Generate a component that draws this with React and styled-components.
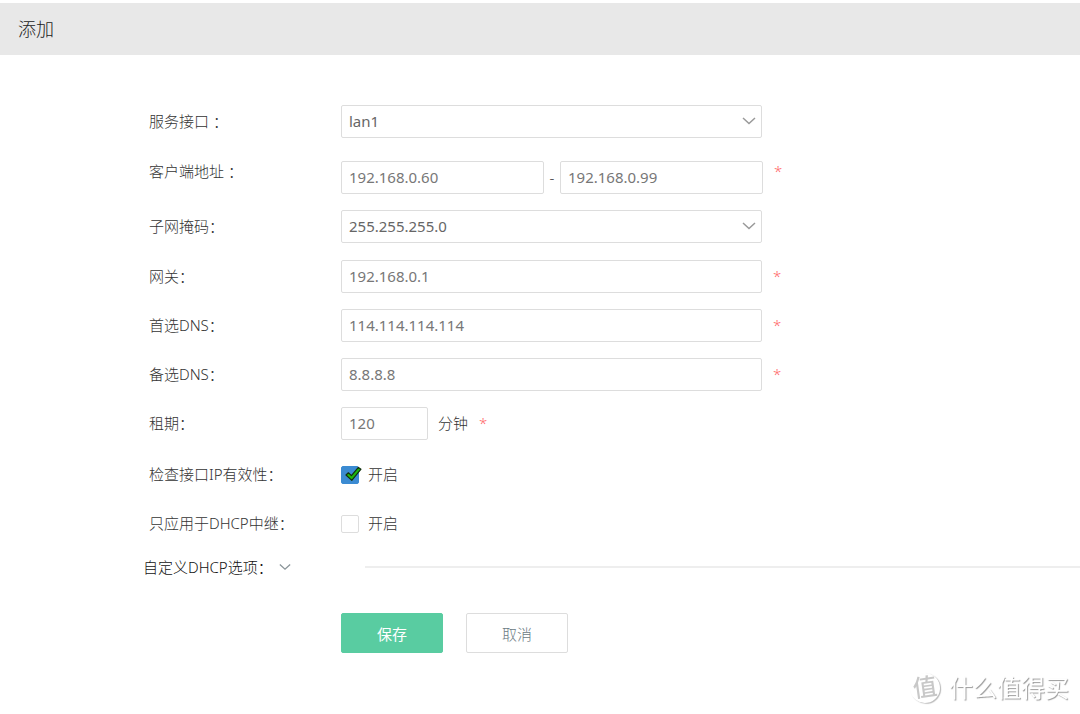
import React, { useState } from 'react'
import styled, { createGlobalStyle } from 'styled-components'

const masks = ['255.255.255.0', '255.255.0.0', '255.0.0.0']

function Chevron({ className }) {
  return (
    <svg className={className} width="14" height="8" viewBox="0 0 14 8" fill="none" aria-hidden="true">
      <path d="M1 1 L7 6.5 L13 1" stroke="currentColor" strokeWidth="1.5" />
    </svg>
  )
}

function SelectField({ id, label, options, value, onChange }) {
  return (
    <Row $gap={17}>
      <Label htmlFor={id}>{label}</Label>
      <SelectWrapper>
        <Select id={id} value={value} onChange={onChange}>
          {options.map((option) => <option key={option}>{option}</option>)}
        </Select>
        <SelectArrow />
      </SelectWrapper>
    </Row>
  )
}

function TextField({ id, label, value, onChange }) {
  return (
    <Row>
      <Label htmlFor={id}>{label}</Label>
      <Control>
        <Input id={id} name={id} value={value} onChange={onChange} />
      </Control>
      <Star>*</Star>
    </Row>
  )
}

function CheckField({ id, label, checked, onChange }) {
  return (
    <Row>
      <Label as="span" id={`${id}-label`}>{label}</Label>
      <CheckLabel>
        <CheckBox type="checkbox" name={id} aria-describedby={`${id}-label`} checked={checked} onChange={onChange} />
        {checked && (
          <Tick viewBox="0 0 17 16" aria-hidden="true">
            <path d="M1 9 L3.4 6.8 L6.4 9.6 L13.4 1.4 L16 3.2 L6.8 14.4 Z" fill="#1db80c" stroke="#123010" strokeWidth="1.2" strokeLinejoin="round" />
          </Tick>
        )}
        开启
      </CheckLabel>
    </Row>
  )
}

function App() {
  const [form, setForm] = useState({
    iface: 'lan1',
    start: '192.168.0.60',
    end: '192.168.0.99',
    mask: '255.255.255.0',
    gateway: '192.168.0.1',
    dns1: '114.114.114.114',
    dns2: '8.8.8.8',
    lease: '120',
    checkIp: true,
    relayOnly: false,
  })

  const update = (key) => (e) => setForm({ ...form, [key]: e.target.value })
  const toggle = (key) => (e) => setForm({ ...form, [key]: e.target.checked })

  return (
    <Page lang="zh-CN">
      <GlobalStyle />
      <Header>
        <Title>添加</Title>
      </Header>
      <Form onSubmit={(e) => e.preventDefault()}>
        <SelectField id="iface" label="服务接口 ：" options={['lan1', 'lan2']} value={form.iface} onChange={update('iface')} />
        <Row>
          <Label htmlFor="start">客户端地址 ：</Label>
          <Range>
            <Input id="start" value={form.start} onChange={update('start')} />
            <Dash>-</Dash>
            <Input aria-label="结束地址" value={form.end} onChange={update('end')} />
          </Range>
          <Star>*</Star>
        </Row>
        <SelectField id="mask" label="子网掩码：" options={masks} value={form.mask} onChange={update('mask')} />
        <TextField id="gateway" label="网关：" value={form.gateway} onChange={update('gateway')} />
        <TextField id="dns1" label="首选DNS：" value={form.dns1} onChange={update('dns1')} />
        <TextField id="dns2" label="备选DNS：" value={form.dns2} onChange={update('dns2')} />
        <Row>
          <Label htmlFor="lease">租期：</Label>
          <ShortControl>
            <Input id="lease" value={form.lease} onChange={update('lease')} />
          </ShortControl>
          <Unit>分钟</Unit>
          <Star>*</Star>
        </Row>
        <Checks>
          <CheckField id="checkIp" label="检查接口IP有效性：" checked={form.checkIp} onChange={toggle('checkIp')} />
          <CheckField id="relayOnly" label="只应用于DHCP中继：" checked={form.relayOnly} onChange={toggle('relayOnly')} />
        </Checks>
        <Options>
          <Expand type="button">
            自定义DHCP选项：
            <Chevron />
          </Expand>
          <Line />
        </Options>
        <Actions>
          <Button type="submit" $primary>保存</Button>
          <Button type="button">取消</Button>
        </Actions>
      </Form>
      <Watermark>
        <Badge>值</Badge>
        什么值得买
      </Watermark>
    </Page>
  )
}

const GlobalStyle = createGlobalStyle`
  * {
    box-sizing: border-box;
  }
  body {
    margin: 0;
    background: #fff;
  }
  body, input, select, button {
    font-family: "Noto Sans", "Noto Sans CJK SC", sans-serif;
    font-size: 15px;
    font-weight: 300;
    color: #333;
  }
`
const Page = styled.div`
  padding-top: 3px;
`
const Header = styled.header`
  height: 52px;
  padding: 0 18px 3px;
  display: flex;
  align-items: center;
  background: #e8e8e8;
`
const Title = styled.h1`
  margin: 0;
  font-size: 18px;
  font-weight: 300;
  color: #222;
`
const Form = styled.form`
  padding: 50px 0 0 149px;
`
const Row = styled.div`
  display: flex;
  align-items: flex-start;
  line-height: 33px;
  margin-bottom: ${(props) => props.$gap || 16}px;
`
const Label = styled.label`
  flex: 0 0 192px;
  white-space: nowrap;
`
const Control = styled.div`
  display: flex;
  flex: 0 1 421px;
  min-width: 0;
`
const SelectWrapper = styled(Control)`
  position: relative;
`
const ShortControl = styled(Control)`
  flex-basis: 87px;
`
const Range = styled(Control)`
  flex-basis: 422px;
  padding-top: 6px;
`
const Input = styled.input`
  flex: 1;
  min-width: 0;
  height: 33px;
  padding: 0 7px 2px;
  border: 1px solid #ddd;
  border-radius: 2px;
  background: #fff;
  color: #777;
  font-weight: 400;
  outline: none;
  &:focus {
    border-color: #59cca1;
  }
`
const Select = styled.select`
  flex: 1;
  min-width: 0;
  height: 33px;
  padding: 0 28px 2px 7px;
  border: 1px solid #ddd;
  border-radius: 2px;
  background: #fff;
  color: #666;
  font-weight: 400;
  appearance: none;
  outline: none;
`
const SelectArrow = styled(Chevron)`
  position: absolute;
  top: 12px;
  right: 6px;
  color: #999;
  pointer-events: none;
`
const Dash = styled.span`
  flex: 0 0 16px;
  text-align: center;
`
const Star = styled.span`
  margin-left: 11px;
  color: #f66;
`
const Unit = styled.span`
  margin-left: 10px;
`
const Checks = styled.div`
  padding-top: 2px;
`
const CheckLabel = styled.label`
  position: relative;
  display: flex;
  align-items: center;
  gap: 9px;
`
const CheckBox = styled.input`
  width: 18px;
  height: 18px;
  margin: 0;
  border: 1px solid #ddd;
  border-radius: 2px;
  appearance: none;
  &:checked {
    background: #3b8bd2;
    border-color: #3b8bd2;
  }
`
const Tick = styled.svg`
  position: absolute;
  left: 4px;
  top: 8px;
  width: 17px;
  height: 16px;
`
const Options = styled.div`
  display: flex;
  align-items: center;
  margin-left: -6px;
`
const Expand = styled.button`
  flex: 0 0 222px;
  display: flex;
  align-items: center;
  gap: 6px;
  padding: 0;
  border: 0;
  background: none;
  color: #111;
  text-align: left;
  svg {
    width: 12px;
    color: #8a9499;
  }
`
const Line = styled.div`
  flex: 1;
  height: 2px;
  background: #eee;
`
const Actions = styled.div`
  display: flex;
  gap: 23px;
  padding: 36px 0 60px 192px;
`
const Button = styled.button`
  width: 102px;
  height: 40px;
  border: 1px solid ${(props) => (props.$primary ? '#59cca1' : '#ddd')};
  border-radius: 2px;
  background: ${(props) => (props.$primary ? '#59cca1' : '#fff')};
  color: ${(props) => (props.$primary ? '#fff' : '#6b7a83')};
  font-weight: ${(props) => (props.$primary ? 400 : 300)};
  cursor: pointer;
`
const Watermark = styled.div`
  position: fixed;
  right: 11px;
  bottom: 11px;
  display: flex;
  align-items: center;
  gap: 9px;
  font-size: 24px;
  font-weight: 400;
  line-height: 28px;
  color: #fff;
  text-shadow: 1px 1px 1px #999;
`
const Badge = styled.span`
  width: 30px;
  height: 30px;
  border-radius: 50%;
  box-shadow: 1px 1px 1px #bbb;
  color: #c8c8c8;
  font-weight: 500;
  text-align: center;
  text-shadow: none;
  transform: rotate(-8deg);
`

export default App
